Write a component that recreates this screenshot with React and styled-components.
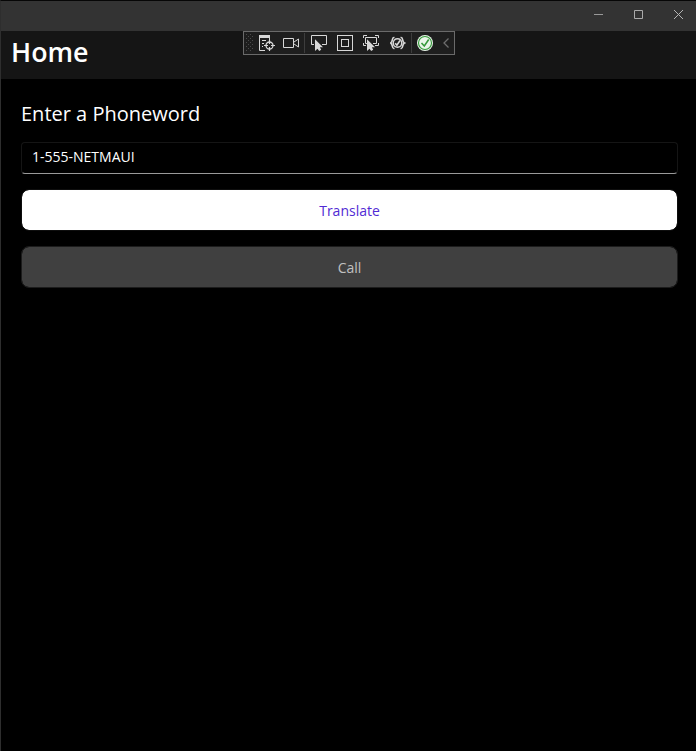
import React from 'react';
import styled, { createGlobalStyle } from 'styled-components';

const GlobalStyle = createGlobalStyle`
  * { box-sizing: border-box; }
  body { margin: 0; background: #000; }
`;

const Window = styled.div`
  position: relative;
  display: flex;
  flex-direction: column;
  width: 696px;
  height: 751px;
  overflow: hidden;
  background: #000;
  border-left: 1px solid #2e2e2e;
  border-top: 1px solid #060606;
  color: #fff;
  font-family: 'Open Sans', sans-serif;
`;

const TitleBar = styled.header`
  display: flex;
  justify-content: flex-end;
  height: 30px;
  flex: none;
  background: #333;
`;

const WindowButton = styled.button`
  display: flex;
  justify-content: center;
  align-items: flex-start;
  width: 40px;
  height: 30px;
  padding: 8px 0 0 4px;
  border: 0;
  background: transparent;
`;

const NavBar = styled.div`
  height: 48px;
  flex: none;
  padding-left: 10px;
  background: #151515;
`;

const PageTitle = styled.h1`
  margin: 0;
  font-size: 26.8px;
  line-height: 41px;
  font-weight: 600;
`;

const Content = styled.main`
  display: flex;
  flex-direction: column;
  padding: 21px 18px 0 20px;
`;

const Label = styled.label`
  font-size: 20px;
  line-height: 28px;
  margin-bottom: 14px;
`;

const Entry = styled.input`
  width: 657px;
  height: 32px;
  padding: 0 10px 3px;
  border: 1px solid #151515;
  border-bottom-color: #9a9a9a;
  border-radius: 4px;
  outline: 0;
  background: #000;
  color: #fff;
  font: 14px 'Open Sans', sans-serif;
`;

const ActionButton = styled.button`
  width: 657px;
  height: 42px;
  margin-top: ${(p) => p.$gap}px;
  padding: 0;
  border: 1px solid ${(p) => (p.disabled ? '#1c1c1c' : '#0e0e0e')};
  border-radius: 8px;
  background: ${(p) => (p.disabled ? '#404040' : '#fff')};
  background-clip: padding-box;
  color: ${(p) => (p.disabled ? '#c0c0c0' : '#512bd4')};
  font: 14px 'Open Sans', sans-serif;
`;

const DebugToolbar = styled.div`
  position: absolute;
  left: 242px;
  top: 30px;
  display: flex;
  align-items: center;
  width: 212px;
  height: 24px;
  padding-left: 2px;
  border: 1px solid #6a6a6a;
  background: #1e1e1e;
`;

const Slot = styled.span`
  display: flex;
  margin-left: ${(p) => p.$gap}px;
`;

const Divider = styled.span`
  width: 1px;
  height: 20px;
  margin-left: ${(p) => p.$gap}px;
  background: #3d3d3d;
`;

const Icon = ({ w = 16, h = 16, crisp, children }) => (
  <svg width={w} height={h} viewBox={`0 0 ${w} ${h}`} fill="none" stroke="#d8d8d8" shapeRendering={crisp ? 'crispEdges' : 'auto'}>
    {children}
  </svg>
);

const Grip = () => (
  <Icon w={7} h={18}>
    <g stroke="#4b4b4b" strokeDasharray="1 3">
      <path d="M.5 0v18M4.5 0v18" />
      <path d="M2.5 2v16M6.5 2v16" />
    </g>
  </Icon>
);

const LiveTree = () => (
  <Icon>
    <path d="M0 0h11v3H0z" fill="#d8d8d8" stroke="none" />
    <path d="M.5 2v13.5H6M10.5 2v3" />
    <path d="M3 5.5h4M3 8.5h2M3 11.5h1" />
    <circle cx="10.5" cy="10.5" r="3.5" strokeWidth="1.3" />
    <path d="M10.5 5v4M10.5 12v4M5 10.5h4M12 10.5h4" strokeWidth="1.2" />
  </Icon>
);

const Camera = () => (
  <Icon>
    <path d="M.5 3.5h10v9H.5zM11 7l4.5-3v8L11 9" />
  </Icon>
);

const Pointer = () => (
  <path d="M4 4.2V16l2.5-2.3L8.2 16l2-1.2-1.3-2.6H12z" fill="#d8d8d8" stroke="none" />
);

const SelectElement = () => (
  <Icon>
    <path d="M3 9.5H.5v-9h15v9H11" />
    <Pointer />
  </Icon>
);

const LayoutAdorners = () => (
  <Icon crisp>
    <path d="M.5.5h15v15H.5zM4.5 4.5h7v7h-7z" />
  </Icon>
);

const TrackFocus = () => (
  <Icon>
    <path d="M.5 3V.5H4M12 .5h3.5V3M.5 8v2.5H3M15.5 8v2.5H12" />
    <path d="M4 8.5H2.5v-6h11v6H10" />
    <Pointer />
  </Icon>
);

const BindingFailures = () => (
  <Icon>
    <path d="M4.5 2.500H3.800C1.500 2.500 3.200 6.800.6 8c2.600 1.200.9 5.500 3.200 5.500h.7M10.500 2.500h.7c2.300 0 .6 4.300 3.200 5.500-2.600 1.200-.9 5.500-3.200 5.500h-.7" strokeWidth="1.600" />
    <circle cx="7.500" cy="8" r="4.300" strokeWidth="1.500" />
    <path d="M5.200 8.200l1.700 2L10 5.500" strokeWidth="1.600" />
  </Icon>
);

const HotReload = () => (
  <Icon>
    <circle cx="8" cy="8" r="8" fill="#e9f5e9" stroke="none" />
    <circle cx="8" cy="8" r="6.5" stroke="#35983a" strokeWidth="1.1" />
    <path d="M4.5 8l2.800 3L11.700 4.500" stroke="#35983a" strokeWidth="1.6" />
  </Icon>
);

const Collapse = () => (
  <Icon w={7} h={10}>
    <path d="M5.5.5L1 5l4.500 4.500" stroke="#6e6e6e" strokeWidth="1.3" />
  </Icon>
);

export default function App() {
  return (
    <>
      <GlobalStyle />
      <Window>
        <TitleBar>
          <WindowButton aria-label="Minimize">
            <svg width="11" height="11" fill="none" stroke="#999"><path d="M1 5.5h9" /></svg>
          </WindowButton>
          <WindowButton aria-label="Maximize">
            <svg width="11" height="11" fill="none" stroke="#aaa"><path d="M1.5 1.5h8v8h-8z" /></svg>
          </WindowButton>
          <WindowButton aria-label="Close">
            <svg width="11" height="11" fill="none" stroke="#b4b4b4"><path d="M1 1l9 9M10 1l-9 9" /></svg>
          </WindowButton>
        </TitleBar>
        <NavBar>
          <PageTitle>Home</PageTitle>
        </NavBar>
        <DebugToolbar>
          <Slot $gap={0}><Grip /></Slot>
          <Slot $gap={6}><LiveTree /></Slot>
          <Slot $gap={8}><Camera /></Slot>
          <Divider $gap={5} />
          <Slot $gap={6}><SelectElement /></Slot>
          <Slot $gap={10}><LayoutAdorners /></Slot>
          <Slot $gap={10}><TrackFocus /></Slot>
          <Slot $gap={11}><BindingFailures /></Slot>
          <Divider $gap={5} />
          <Slot $gap={5}><HotReload /></Slot>
          <Slot $gap={10}><Collapse /></Slot>
        </DebugToolbar>
        <Content>
          <Label htmlFor="phoneword">Enter a Phoneword</Label>
          <Entry id="phoneword" defaultValue="1-555-NETMAUI" />
          <ActionButton $gap={15}>Translate</ActionButton>
          <ActionButton $gap={15} disabled>Call</ActionButton>
        </Content>
      </Window>
    </>
  );
}
